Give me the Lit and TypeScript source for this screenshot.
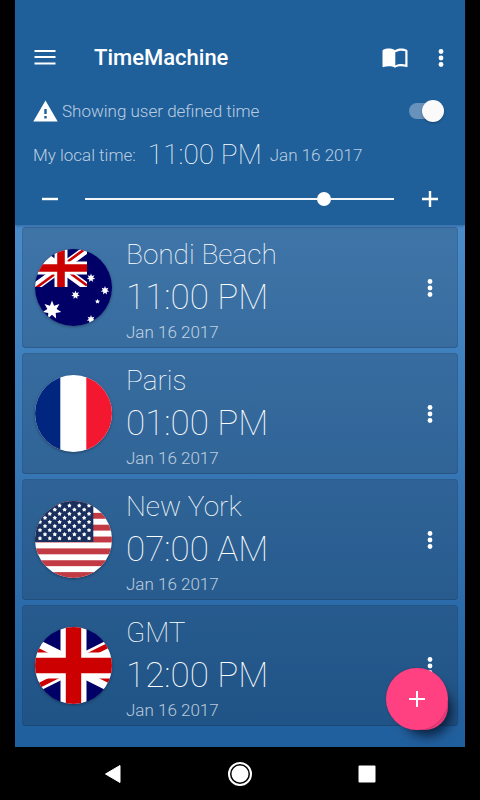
import { LitElement, html, svg, css, type TemplateResult } from "lit";
import { customElement, property, state } from "lit/decorators.js";

interface Zone {
  id: string;
  name: string;
  time: string;
  date: string;
  flag: string;
}

const ZONES: Zone[] = [
  { id: "bondi", name: "Bondi Beach", time: "11:00 PM", date: "Jan 16 2017", flag: "au" },
  { id: "paris", name: "Paris", time: "01:00 PM", date: "Jan 16 2017", flag: "fr" },
  { id: "ny", name: "New York", time: "07:00 AM", date: "Jan 16 2017", flag: "us" },
  { id: "gmt", name: "GMT", time: "12:00 PM", date: "Jan 16 2017", flag: "gb" },
];

/** Points of a regular star centred on (cx, cy). */
function star(cx: number, cy: number, r: number, tips: number, inner: number): string {
  const pts: string[] = [];
  for (let i = 0; i < tips * 2; i++) {
    const rad = i % 2 ? r * inner : r;
    const a = (Math.PI * i) / tips - Math.PI / 2;
    pts.push(`${(cx + rad * Math.cos(a)).toFixed(2)},${(cy + rad * Math.sin(a)).toFixed(2)}`);
  }
  return pts.join(" ");
}

const usStars = () => {
  const out: TemplateResult[] = [];
  for (let row = 0; row < 9; row++) {
    for (let col = 0; col < 6; col++) {
      const x = (row % 2 ? 10 : 5) + col * 9.8;
      if (x > 56) continue;
      out.push(svg`<polygon fill="#fff" points=${star(x, 4.6 + row * 4.1, 2.3, 5, 0.6)} />`);
    }
  }
  return out;
};

const FLAGS: Record<string, TemplateResult> = {
  au: svg`
    <rect width="77" height="77" fill="#006" />
    <svg x="-14" y="0" width="66" height="38" viewBox="0 0 66 38">
      <path d="M14 0L66 38M66 0L14 38M0 0L40 19" stroke="#fff" stroke-width="8" />
      <path d="M0 1.5L33 20.5M40 17.5L66 -1.5M40 20.5L10 42.5M40 17.5L66 36.5" stroke="#c00" stroke-width="2.6" />
      <path d="M40 0V38M0 19H66" stroke="#fff" stroke-width="13" />
      <path d="M40 0V38M0 19H66" stroke="#c00" stroke-width="7.6" />
    </svg>
    <g fill="#fff">
      <polygon points=${star(17, 61, 9.5, 7, 0.5)} />
      <polygon points=${star(40.5, 46, 4.4, 7, 0.5)} />
      <polygon points=${star(56, 29, 4.4, 7, 0.5)} />
      <polygon points=${star(70, 41.5, 4.4, 7, 0.5)} />
      <polygon points=${star(62.5, 52.5, 2.6, 5, 0.5)} />
      <polygon points=${star(56, 70.5, 4.4, 7, 0.5)} />
    </g>`,
  fr: svg`
    <rect width="77" height="77" fill="#fff" />
    <rect width="25.3" height="77" fill="#00267f" />
    <rect x="51.3" width="26" height="77" fill="#f31830" />`,
  us: svg`
    <rect width="77" height="77" fill="#fff" />
    ${[0, 1, 2, 3, 4, 5, 6].map((i) => svg`<rect y=${i * 11.85} width="77" height="5.9" fill="#c13a44" />`)}
    <rect width="58.3" height="41" fill="#192f5d" />
    ${usStars()}`,
  gb: svg`
    <rect width="77" height="77" fill="#006" />
    <path d="M-38.5 0L115.5 77M115.5 0L-38.5 77" stroke="#fff" stroke-width="15" />
    <path d="M-38.5 2.8L38.5 41.3M38.5 35.7L115.5 -2.8M38.5 35.7L115.5 74.2M38.5 41.3L-38.5 79.8" stroke="#c00" stroke-width="5" />
    <path d="M38.5 0V77M0 38.5H77" stroke="#fff" stroke-width="26" />
    <path d="M38.5 0V77M0 38.5H77" stroke="#c00" stroke-width="15.4" />`,
};

const dots = html`<svg viewBox="0 0 6 20" width="6" height="20" fill="#fff" aria-hidden="true">
  <circle cx="3" cy="3.5" r="2.4" /><circle cx="3" cy="10" r="2.4" /><circle cx="3" cy="16.5" r="2.4" />
</svg>`;

const plain = css`
  button {
    display: flex;
    align-items: center;
    justify-content: center;
    padding: 0;
    border: 0;
    background: none;
    color: #fff;
    font: inherit;
    cursor: pointer;
  }
`;

@customElement("zone-card")
export class ZoneCard extends LitElement {
  @property({ attribute: false }) zone!: Zone;

  static styles = [
    plain,
    css`
      :host {
        display: flex;
        align-items: center;
        box-sizing: border-box;
        min-height: 121px;
        padding: 0 16px 0 13px;
        border-radius: 4px;
        background: rgba(26, 30, 36, 0.2);
        box-shadow: inset 0 0 0 1px rgba(20, 40, 80, 0.14), inset 0 -1px 0 rgba(20, 40, 80, 0.14);
      }
      .flag {
        flex: none;
        width: 77px;
        height: 77px;
        border-radius: 50%;
        box-shadow: 0 1px 3px rgba(0, 0, 0, 0.35);
      }
      .info {
        flex: 1;
        padding-top: 2px;
        margin-left: 14px;
        white-space: nowrap;
      }
      .name,
      .time,
      .date {
        margin: 0;
        font-weight: 100;
      }
      .name {
        font-size: 28px;
        line-height: 38px;
      }
      .time {
        font-size: 35px;
        line-height: 48px;
      }
      .date {
        font-size: 17px;
        line-height: 20px;
        font-weight: 300;
        color: rgba(255, 255, 255, 0.7);
      }
      .more {
        width: 24px;
        height: 48px;
      }
    `,
  ];

  render() {
    const z = this.zone;
    return html`
      <svg class="flag" viewBox="0 0 77 77" role="img" aria-label="${z.name} flag">${FLAGS[z.flag]}</svg>
      <div class="info">
        <h2 class="name">${z.name}</h2>
        <p class="time">${z.time}</p>
        <p class="date">${z.date}</p>
      </div>
      <button class="more" aria-label="Options for ${z.name}">${dots}</button>
    `;
  }
}

@customElement("app-root")
export class AppRoot extends LitElement {
  @state() private offset = 786;
  @state() private custom = true;

  static styles = [
    plain,
    css`
      :host {
        display: flex;
        flex-direction: column;
        box-sizing: border-box;
        min-height: 100vh;
        padding: 0 15px;
        background: #000;
        color: #fff;
        font-family: Roboto, "Liberation Sans", sans-serif;
      }
      header {
        position: relative;
        padding-top: 30px;
        background: #1f609b;
        box-shadow: 0 1px 3px rgba(0, 30, 80, 0.35);
      }
      .bar,
      .row,
      .local,
      .slide {
        display: flex;
        align-items: center;
        white-space: nowrap;
      }
      .bar {
        height: 55px;
        padding: 0 12px 0 18px;
      }
      .menu {
        width: 24px;
        height: 48px;
      }
      h1 {
        flex: 1;
        margin: 0 0 0 37px;
        font-size: 22px;
        line-height: 28px;
        font-weight: 500;
      }
      .book {
        width: 28px;
        height: 48px;
        margin-right: 20px;
      }
      .more {
        width: 24px;
        height: 48px;
      }
      .row {
        height: 52px;
        padding: 0 21px 0 18px;
      }
      .row,
      .local {
        font-size: 17px;
        font-weight: 300;
        color: rgba(255, 255, 255, 0.7);
      }
      .row label {
        flex: 1;
        margin-left: 4px;
      }
      .switch {
        appearance: none;
        display: flex;
        align-items: center;
        justify-content: flex-end;
        width: 35px;
        height: 16px;
        margin: 0;
        border-radius: 8px;
        background: #6892bb;
      }
      .switch::before {
        content: "";
        flex: none;
        width: 22px;
        height: 22px;
        border-radius: 50%;
        background: #fafafa;
        box-shadow: 0 1px 2px rgba(0, 0, 0, 0.35);
      }
      .switch:not(:checked) {
        justify-content: flex-start;
      }
      .local {
        height: 35px;
        padding: 0 18px;
      }
      .local .clock {
        margin: 0 8px 0 12px;
        font-size: 28px;
        line-height: 34px;
        font-weight: 100;
        color: #fff;
      }
      .slide {
        height: 53px;
        padding: 0 23px;
      }
      .step {
        flex: none;
        width: 24px;
        height: 40px;
      }
      .range {
        appearance: none;
        flex: 1;
        min-width: 0;
        height: 16px;
        margin: 0 24px 0 23px;
        background: linear-gradient(#f2f6fa, #f2f6fa) center / 100% 2px no-repeat;
      }
      .range::-webkit-slider-thumb {
        appearance: none;
        width: 14px;
        height: 14px;
        border-radius: 50%;
        background: #fff;
      }
      main {
        flex: 1;
        display: flex;
        flex-direction: column;
        gap: 5px;
        padding: 2px 7px 21px;
        background: linear-gradient(#4a8bca, #205f9d);
      }
      .fab-slot {
        position: relative;
      }
      .fab {
        position: absolute;
        right: 17px;
        bottom: 17px;
        width: 62px;
        height: 62px;
      }
      .fab::before,
      .fab::after {
        content: "";
        position: absolute;
        border-radius: 50%;
      }
      .fab::before {
        right: 0;
        bottom: 0;
        width: 46px;
        height: 46px;
        background: #e83c7a;
        box-shadow: 2px 4px 12px 2px rgba(0, 10, 30, 0.75);
      }
      .fab::after {
        inset: 0;
        background: #ff4081;
        box-shadow: 0 0 2px rgba(120, 20, 60, 0.4);
      }
      .fab svg {
        position: relative;
        z-index: 1;
      }
      nav {
        display: flex;
        align-items: center;
        justify-content: center;
        height: 53px;
        gap: 99px;
      }
      nav button {
        width: 28px;
        height: 28px;
      }
    `,
  ];

  render() {
    return html`
      <header>
        <div class="bar">
          <button class="menu" aria-label="Open menu">
            <svg width="22" height="16" viewBox="0 0 22 16" fill="#fff">
              <path d="M.5 0h21v2H.5zM.5 6h21v2H.5zM.5 12.500h21v2H.5z" />
            </svg>
          </button>
          <h1>TimeMachine</h1>
          <button class="book" aria-label="Guide">
            <svg width="26" height="20" viewBox="0 0 26 20">
              <path fill="#fff" d="M13 2.2C10.5 .2 4.5 0 1.2 1.8Q.5 2.2 .5 3v15.6q.2.8 1 .5C5 17.8 10 17.8 13 19.7c3-1.9 8-1.9 11.5-.6q.8.3 1-.5V3q0-.8-.7-1.2C21.5 0 15.500.2 13 2.2zM23.3 16.5c-3-.9-7-.6-10 1V4.3c3-1.8 7-2 10-1.1z" />
            </svg>
          </button>
          <button class="more" aria-label="More options">${dots}</button>
        </div>

        <div class="row">
          <svg width="25" height="22" viewBox="0 0 25 22" aria-hidden="true">
            <path fill="#fff" d="M12.5 0.5L24.7 21.5H.3z" />
            <path fill="#1f609b" d="M11.3 9h2.4v5h-2.4zM11.3 16h2.4v2.4h-2.4z" />
          </svg>
          <label for="custom">Showing user defined time</label>
          <input
            class="switch"
            id="custom"
            type="checkbox"
            role="switch"
            .checked=${this.custom}
            @change=${(e: Event) => (this.custom = (e.target as HTMLInputElement).checked)}
          />
        </div>

        <div class="local">
          <span>My local time:</span>
          <span class="clock">11:00 PM</span>
          <span>Jan 16 2017</span>
        </div>

        <div class="slide">
          <button class="step" aria-label="Earlier" @click=${() => (this.offset -= 10)}>
            <svg width="16" height="16" viewBox="0 0 16 16"><path d="M0 8H16" stroke="#fff" stroke-width="2.4" /></svg>
          </button>
          <input
            class="range"
            type="range"
            min="0"
            max="1000"
            aria-label="Time of day"
            .value=${String(this.offset)}
            @input=${(e: Event) => (this.offset = Number((e.target as HTMLInputElement).value))}
          />
          <button class="step" aria-label="Later" @click=${() => (this.offset += 10)}>
            <svg width="16" height="16" viewBox="0 0 16 16"><path d="M0 8H16M8 0V16" stroke="#fff" stroke-width="2.4" /></svg>
          </button>
        </div>
      </header>

      <main>${ZONES.map((z) => html`<zone-card .zone=${z}></zone-card>`)}</main>

      <div class="fab-slot">
        <button class="fab" aria-label="Add a place">
          <svg width="16" height="16" viewBox="0 0 16 16"><path d="M0 8H16M8 0V16" stroke="#fff" stroke-width="2" /></svg>
        </button>
      </div>

      <nav aria-label="System">
        <button aria-label="Back">
          <svg width="18" height="20" viewBox="0 0 18 20"><path d="M1.5 10L16 1.5V18.5z" fill="#fff" stroke="#fff" stroke-linejoin="round" /></svg>
        </button>
        <button aria-label="Home">
          <svg width="26" height="26" viewBox="0 0 26 26">
            <circle cx="13" cy="13" r="11" fill="none" stroke="#fff" stroke-width="2" /><circle cx="13" cy="13" r="8.5" fill="#fff" />
          </svg>
        </button>
        <button aria-label="Recent apps">
          <svg width="18" height="18" viewBox="0 0 18 18"><rect x="0.5" y="0.5" width="17" height="17" rx="1" fill="#fff" /></svg>
        </button>
      </nav>
    `;
  }
}
